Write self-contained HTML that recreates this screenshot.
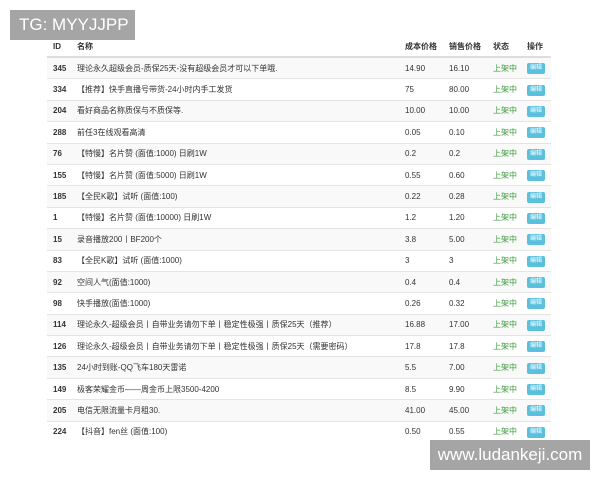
<!DOCTYPE html>
<html><head><meta charset="utf-8"><style>
body{margin:0;width:600px;height:480px;background:#fff;font-family:"Liberation Sans","Noto Sans CJK SC",sans-serif;position:relative;overflow:hidden}
table{position:absolute;left:47px;top:36px;width:504px;border-collapse:collapse;font-size:8px;color:#333}
td,th{padding:0 0 0 6px;text-align:left;white-space:nowrap}
td{height:20.4px;border-top:1px solid #e4e4e4}
th{height:20px;font-weight:bold;border-bottom:2px solid #ddd}
tbody tr:first-child td{border-top:none}
tbody tr:nth-child(odd){background:#f9f9f9}
td:first-child{font-weight:bold}
.s{color:#3c9a3c}
.b{display:inline-block;background:#5bc0de;color:#fff;font-size:6px;padding:2px 3px;border-radius:2px;line-height:7px}
.wm{position:absolute;background:#a5a5a5;color:#fff;font-size:17px;line-height:30px;white-space:nowrap;overflow:hidden}
</style></head><body>
<table>
<thead><tr><th style="width:18px">ID</th><th>名称</th><th style="width:38px">成本价格</th><th style="width:38px">销售价格</th><th style="width:28px">状态</th><th style="width:24px">操作</th></tr></thead>
<tbody>
<tr><td>345</td><td>理论永久超级会员-质保25天-没有超级会员才可以下单哦.</td><td>14.90</td><td>16.10</td><td class="s">上架中</td><td><span class="b">编辑</span></td></tr>
<tr><td>334</td><td>【推荐】快手直播号带货-24小时内手工发货</td><td>75</td><td>80.00</td><td class="s">上架中</td><td><span class="b">编辑</span></td></tr>
<tr><td>204</td><td>看好商品名称质保与不质保等.</td><td>10.00</td><td>10.00</td><td class="s">上架中</td><td><span class="b">编辑</span></td></tr>
<tr><td>288</td><td>前任3在线观看高清</td><td>0.05</td><td>0.10</td><td class="s">上架中</td><td><span class="b">编辑</span></td></tr>
<tr><td>76</td><td>【特慢】名片赞 (面值:1000) 日刷1W</td><td>0.2</td><td>0.2</td><td class="s">上架中</td><td><span class="b">编辑</span></td></tr>
<tr><td>155</td><td>【特慢】名片赞 (面值:5000) 日刷1W</td><td>0.55</td><td>0.60</td><td class="s">上架中</td><td><span class="b">编辑</span></td></tr>
<tr><td>185</td><td>【全民K歌】试听 (面值:100)</td><td>0.22</td><td>0.28</td><td class="s">上架中</td><td><span class="b">编辑</span></td></tr>
<tr><td>1</td><td>【特慢】名片赞 (面值:10000) 日刷1W</td><td>1.2</td><td>1.20</td><td class="s">上架中</td><td><span class="b">编辑</span></td></tr>
<tr><td>15</td><td>录音播放200丨BF200个</td><td>3.8</td><td>5.00</td><td class="s">上架中</td><td><span class="b">编辑</span></td></tr>
<tr><td>83</td><td>【全民K歌】试听 (面值:1000)</td><td>3</td><td>3</td><td class="s">上架中</td><td><span class="b">编辑</span></td></tr>
<tr><td>92</td><td>空间人气(面值:1000)</td><td>0.4</td><td>0.4</td><td class="s">上架中</td><td><span class="b">编辑</span></td></tr>
<tr><td>98</td><td>快手播放(面值:1000)</td><td>0.26</td><td>0.32</td><td class="s">上架中</td><td><span class="b">编辑</span></td></tr>
<tr><td>114</td><td>理论永久-超级会员丨自带业务请勿下单丨稳定性极强丨质保25天（推荐）</td><td>16.88</td><td>17.00</td><td class="s">上架中</td><td><span class="b">编辑</span></td></tr>
<tr><td>126</td><td>理论永久-超级会员丨自带业务请勿下单丨稳定性极强丨质保25天（需要密码）</td><td>17.8</td><td>17.8</td><td class="s">上架中</td><td><span class="b">编辑</span></td></tr>
<tr><td>135</td><td>24小时到账-QQ飞车180天雷诺</td><td>5.5</td><td>7.00</td><td class="s">上架中</td><td><span class="b">编辑</span></td></tr>
<tr><td>149</td><td>极客荣耀金币——周金币上限3500-4200</td><td>8.5</td><td>9.90</td><td class="s">上架中</td><td><span class="b">编辑</span></td></tr>
<tr><td>205</td><td>电信无限流量卡月租30.</td><td>41.00</td><td>45.00</td><td class="s">上架中</td><td><span class="b">编辑</span></td></tr>
<tr><td>224</td><td>【抖音】fen丝 (面值:100)</td><td>0.50</td><td>0.55</td><td class="s">上架中</td><td><span class="b">编辑</span></td></tr>
</tbody></table>
<div class="wm" style="left:10px;top:10px;width:125px;padding-left:9px;box-sizing:border-box">TG: MYYJJPP</div>
<div class="wm" style="left:430px;top:440px;width:160px;text-align:center">www.ludankeji.com</div>
</body></html>
